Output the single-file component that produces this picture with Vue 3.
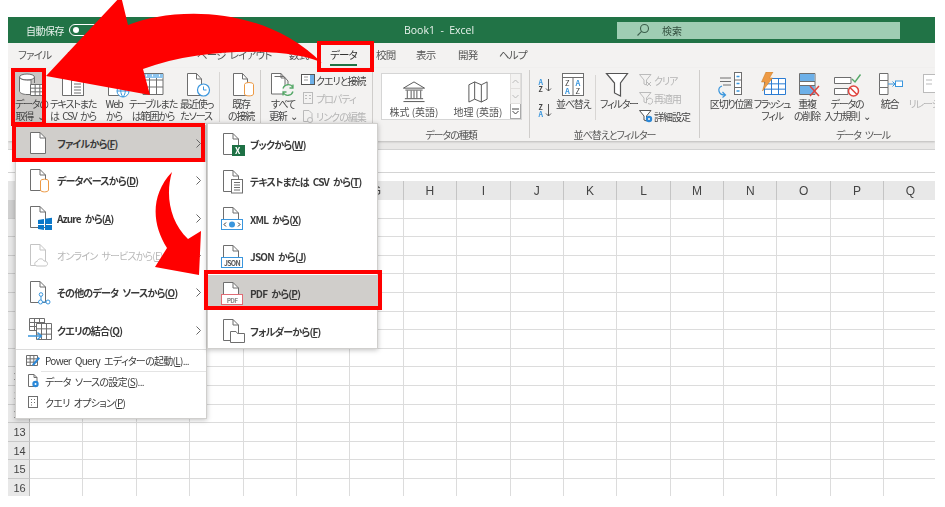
<template>
<div class="page">
  <div class="window">
    <!-- title bar -->
    <div class="titlebar">
      <div class="title-left">
        <span>自動保存</span>
        <span class="toggle"><i></i></span>
        <span>オフ</span>
      </div>
      <div class="title-name">Book1 &nbsp;-&nbsp; Excel</div>
      <div class="search">
        <svg width="14" height="14" viewBox="0 0 14 14" fill="none" stroke="#3c5f4c" stroke-width="1.1">
          <circle cx="8.5" cy="5.5" r="4"/><path d="M5.6 8.4 1.5 12.5"/>
        </svg>
        <span>検索</span>
      </div>
    </div>

    <!-- tabs -->
    <div class="tabs">
      <div v-for="(t, i) in tabs" :key="t.name" class="tab" :class="{ active: t.name === 'データ' }" :style="{ width: tabWidth(i) + 'px' }">
        <span>{{ t.name }}</span>
      </div>
    </div>

    <!-- ribbon -->
    <div class="ribbon">
      <div class="group g-get">
        <div class="group-body">
          <div v-for="c in getCmds" :key="c.lines[0]" class="cmd" :class="{ pressed: c.pressed }" :style="{ width: c.w + 'px' }">
            <svg class="cmd-icon" viewBox="0 0 32 26" v-html="icons[c.icon]"></svg>
            <div v-for="l in c.lines" :key="l" class="cmd-line">{{ l }}</div>
          </div>
          <div class="vsep"></div>
          <div class="cmd w42">
            <svg class="cmd-icon" viewBox="0 0 32 26" v-html="icons.existing"></svg>
            <div class="cmd-line">既存</div>
            <div class="cmd-line">の接続</div>
          </div>
        </div>
      </div>

      <div class="group g-conn">
        <div class="group-body">
          <div class="cmd w36">
            <svg class="cmd-icon" viewBox="0 0 32 26" v-html="icons.refresh"></svg>
            <div class="cmd-line">すべて</div>
            <div class="cmd-line">更新 ⌄</div>
          </div>
          <div class="small-list">
            <div v-for="s in connItems" :key="s.text" class="small-item" :class="{ off: s.off }">
              <svg width="14" height="14" viewBox="0 0 14 14" v-html="icons[s.icon]"></svg>
              <span>{{ s.text }}</span>
            </div>
          </div>
        </div>
      </div>

      <div class="group g-types">
        <div class="group-body">
          <div class="gallery">
            <div class="gallery-item">
              <svg width="26" height="24" viewBox="0 0 26 24" v-html="icons.bank"></svg>
              <span>株式 (英語)</span>
            </div>
            <div class="gallery-item">
              <svg width="26" height="24" viewBox="0 0 26 24" v-html="icons.map"></svg>
              <span>地理 (英語)</span>
            </div>
            <div class="gallery-scroll">
              <div><svg width="7" height="5" viewBox="0 0 7 5"><path d="M.5 4 3.500 1 6.500 4" fill="none" stroke="#bbb"/></svg></div>
              <div><svg width="7" height="5" viewBox="0 0 7 5"><path d="M.5 1 3.500 4 6.500 1" fill="none" stroke="#bbb"/></svg></div>
              <div class="more"><svg width="7" height="7" viewBox="0 0 7 7"><path d="M0 1H7M.5 3 3.500 6 6.500 3" fill="none" stroke="#444"/></svg></div>
            </div>
          </div>
        </div>
        <div class="group-label">データの種類</div>
      </div>

      <div class="group g-sort">
        <div class="group-body">
          <div class="az">
            <svg width="15" height="15" viewBox="0 0 15 15" v-html="icons.az"></svg>
            <svg width="15" height="15" viewBox="0 0 15 15" v-html="icons.za"></svg>
          </div>
          <div class="cmd w33">
            <svg class="cmd-icon" viewBox="0 0 32 26" v-html="icons.sort"></svg>
            <div class="cmd-line">並べ替え</div>
          </div>
          <div class="vsep short"></div>
          <div class="cmd w34">
            <svg class="cmd-icon" viewBox="0 0 32 26" v-html="icons.funnel"></svg>
            <div class="cmd-line">フィルター</div>
          </div>
          <div class="small-list filter-list">
            <div v-for="s in filterItems" :key="s.text" class="small-item" :class="{ off: s.off }">
              <svg width="14" height="14" viewBox="0 0 14 14" v-html="icons[s.icon]"></svg>
              <span>{{ s.text }}</span>
            </div>
          </div>
        </div>
        <div class="group-label">並べ替えとフィルター</div>
      </div>

      <div class="group g-tools">
        <div class="group-body">
          <div v-for="c in toolCmds" :key="c.lines[0]" class="cmd" :class="{ off: c.off }" :style="{ width: c.w + 'px' }">
            <svg class="cmd-icon" viewBox="0 0 32 26" v-html="icons[c.icon]"></svg>
            <div v-for="l in c.lines" :key="l" class="cmd-line">{{ l }}</div>
          </div>
        </div>
        <div class="group-label">データ ツール</div>
      </div>
    </div>

    <div class="strip"></div>
    <div class="formula"></div>

    <!-- sheet -->
    <div class="col-head">
      <div class="corner"></div>
      <div v-for="c in columns" :key="c" class="col">{{ c }}</div>
    </div>
    <div class="sheet">
      <div class="row-heads">
        <div v-for="r in rows" :key="r" class="row-head" :class="{ first: r === 1 }">{{ r }}</div>
      </div>
      <div class="cells">
        <div v-for="n in rows.length * columns.length" :key="n" class="cell"></div>
      </div>
    </div>
  </div>

  <!-- first level menu -->
  <div class="menu main-menu">
    <div v-for="m in mainItems" :key="m.key" class="item" :class="{ active: m.active, off: m.off }">
      <svg class="item-icon" viewBox="0 0 30 24" v-html="icons[m.icon]"></svg>
      <span class="item-text">{{ m.pre }}(<u>{{ m.key }}</u>)</span>
      <svg class="chev" width="5" height="9" viewBox="0 0 5 9"><path d="M.5.500 4.500 4.500.5 8.500" fill="none" stroke="#666"/></svg>
    </div>
    <div class="menu-sep"></div>
    <div v-for="(m, i) in smallItems" :key="m.key" class="mini" :class="{ lined: i === 1 }">
      <svg width="14" height="14" viewBox="0 0 14 14" v-html="icons[m.icon]"></svg>
      <span>{{ m.pre }}(<u>{{ m.key }}</u>){{ m.post }}</span>
    </div>
  </div>

  <!-- file submenu -->
  <div class="menu sub-menu">
    <div v-for="m in subItems" :key="m.key" class="item" :class="{ active: m.active }">
      <svg class="item-icon" viewBox="0 0 30 24" v-html="icons[m.icon]"></svg>
      <span class="item-text">{{ m.pre }}(<u>{{ m.key }}</u>)</span>
    </div>
  </div>

  <!-- callouts drawn on top of the screenshot -->
  <svg class="callouts" width="945" height="507" viewBox="0 0 945 507">
    <g fill="none" stroke="#f00" stroke-width="4">
      <rect x="319" y="43" width="53" height="27"/>
      <rect x="13" y="70" width="31" height="54"/>
      <rect x="14" y="125" width="189" height="35"/>
      <rect x="206" y="272" width="174" height="36"/>
    </g>
    <path fill="#f00" d="M46 76 121-4 128 25C170 8 262 3 322 63 300 50 210 44 143 69L150 95Z"/>
    <path fill="#f00" d="M172 172C150 195 152 225 167 248L155 267 199 275 201 231 188 239C170 222 165 195 172 172Z"/>
  </svg>
</div>
</template>

<script setup>
const tabs = [
  { name: 'ファイル', x: 18 }, { name: 'ホーム', x: 67 }, { name: '挿入', x: 120 },
  { name: 'ページ レイアウト', x: 197 }, { name: '数式', x: 289 }, { name: 'データ', x: 330 },
  { name: '校閲', x: 376 }, { name: '表示', x: 416 }, { name: '開発', x: 458 }, { name: 'ヘルプ', x: 499 }
]
function tabWidth(i) {
  return i < tabs.length - 1 ? tabs[i + 1].x - tabs[i].x : 40
}

const getCmds = [
  { icon: 'getData', lines: ['データの', '取得 ⌄'], w: 29, pressed: true },
  { icon: 'textCsv', lines: ['テキストまた', 'は CSV から'], w: 58 },
  { icon: 'web', lines: ['Web', 'から'], w: 24 },
  { icon: 'table', lines: ['テーブルまた', 'は範囲から'], w: 54 },
  { icon: 'recent', lines: ['最近使っ', 'たソース'], w: 32 }
]
const connItems = [
  { icon: 'sConn', text: 'クエリと接続' },
  { icon: 'sProp', text: 'プロパティ', off: true },
  { icon: 'sLink', text: 'リンクの編集', off: true }
]
const filterItems = [
  { icon: 'sClear', text: 'クリア', off: true },
  { icon: 'sReapply', text: '再適用', off: true },
  { icon: 'sAdvanced', text: '詳細設定' }
]
const toolCmds = [
  { icon: 'split', lines: ['区切り位置'], w: 44 },
  { icon: 'flash', lines: ['フラッシュ', 'フィル'], w: 38 },
  { icon: 'dedupe', lines: ['重複', 'の削除'], w: 32 },
  { icon: 'validate', lines: ['データの', '入力規則 ⌄'], w: 48 },
  { icon: 'merge2', lines: ['統合'], w: 37 },
  { icon: 'relation', lines: ['リレーション'], w: 46, off: true }
]

const columns = 'ABCDEFGHIJKLMNOPQ'.split('')
const rows = Array.from({ length: 16 }, (_, i) => i + 1)

const mainItems = [
  { icon: 'file', pre: 'ファイルから', key: 'F', active: true },
  { icon: 'database', pre: 'データベースから', key: 'D' },
  { icon: 'azure', pre: 'Azure から', key: 'A' },
  { icon: 'online', pre: 'オンライン サービスから', key: 'E', off: true },
  { icon: 'other', pre: 'その他のデータ ソースから', key: 'O' },
  { icon: 'combine', pre: 'クエリの結合', key: 'Q' }
]
const smallItems = [
  { icon: 'sPq', pre: 'Power Query エディターの起動', key: 'L', post: '...' },
  { icon: 'sSettings', pre: 'データ ソースの設定', key: 'S', post: '...' },
  { icon: 'sOptions', pre: 'クエリ オプション', key: 'P', post: '' }
]
const subItems = [
  { icon: 'book', pre: 'ブックから', key: 'W' },
  { icon: 'subText', pre: 'テキストまたは CSV から', key: 'T' },
  { icon: 'xml', pre: 'XML から', key: 'X' },
  { icon: 'json', pre: 'JSON から', key: 'J' },
  { icon: 'pdf', pre: 'PDF から', key: 'P', active: true },
  { icon: 'folder', pre: 'フォルダーから', key: 'F' }
]

const G = '#6e6e6e'
const B = '#3a96dd'
const O = '#ed9a45'
const doc = (c = G) => `<path d="M3.500.5H13L18.500 6V21.500H3.500Z" fill="#fff" stroke="${c}"/><path d="M13 .5V6H18.500" fill="none" stroke="${c}"/>`
const bigDoc = (x, c = G) => `<path d="M${x}.5 1.500H${x + 9.500}L${x + 14}.5 7V23.500H${x}.5Z" fill="#fff" stroke="${c}"/><path d="M${x + 9.500} 1.500V7H${x + 14.500}" fill="none" stroke="${c}"/>`
const grid = (x, y, w, h, c = G) => {
  const cw = w / 3
  const ch = h / 3
  return `<path fill="#fff" stroke="${c}" d="M${x} ${y}h${w}v${h}h${-w}zM${x + cw} ${y}v${h}M${x + 2 * cw} ${y}v${h}M${x} ${y + ch}h${w}M${x} ${y + 2 * ch}h${w}"/>`
}
const tag = (inner, c) => `${doc()}<rect x="1.500" y="12.500" width="21" height="10" fill="#fff" stroke="${c}"/>${inner}`

const icons = {
  // ribbon commands
  getData: `<ellipse cx="12" cy="5" rx="7.500" ry="3" fill="#fff" stroke="${G}"/><path d="M4.500 5V19C4.500 21 8 22.500 12 22.500H16V8C10 8.500 4.500 7.500 4.500 5ZM19.500 5V11" fill="#fff" stroke="${G}"/>` + grid(15.5, 12.5, 14, 11),
  textCsv: bigDoc(5) + `<rect x="14.500" y="8.500" width="12" height="15" fill="#fff" stroke="${G}"/><path d="M17 12h7M17 15h7M17 18h7M17 21h7" stroke="${G}"/>`,
  web: bigDoc(6) + `<circle cx="21" cy="19" r="6" fill="#fff" stroke="${B}"/><path d="M15 19h12M21 13c-3 4-3 8 0 12M21 13c3 4 3 8 0 12" fill="none" stroke="${B}"/>`,
  table: `<path d="M6 1.500h20v21H6zM6 8h20M6 15h20M12.500 1.500v21M19.500 1.500v21" fill="#fff" stroke="${G}"/><path d="M6 2h20v4H6z" fill="#8cc4ee"/><path d="M9 3.500h1M15 3.500h1M22 3.500h1" stroke="#fff" stroke-width="2"/>`,
  recent: bigDoc(7) + `<circle cx="23.500" cy="18" r="6" fill="#fff" stroke="${B}" stroke-width="1.200"/><path d="M23.500 14.500V18H26.500" fill="none" stroke="${B}"/>`,
  existing: bigDoc(8) + `<ellipse cx="24" cy="12.500" rx="4.500" ry="2" fill="#fff" stroke="${O}"/><path d="M19.500 12.500V22C19.500 24.500 28.500 24.500 28.500 22V12.500" fill="#fff" stroke="${O}"/>`,
  refresh: `<path d="M4.500 1.500H14L18 6V22H4.500Z M14 1.500V6H18" fill="#fff" stroke="${G}"/><path d="M7.500 4.500H17L21 9V12" fill="none" stroke="${G}"/><circle cx="21" cy="18" r="6" fill="#f3f2f1"/><path d="M16 16.500A5.500 5.500 0 0 1 26 15.500M26 19.500A5.500 5.500 0 0 1 16 20.500M26 12.500V16H22.500M16 23.500V20H19.500" fill="none" stroke="#55a868" stroke-width="1.300"/>`,
  sort: `<rect x="5.500" y="1.500" width="21" height="22" fill="#fff" stroke="${G}"/><path d="M5.500 5.500H26.500M16 5.500V23.500" stroke="${G}"/><text x="8" y="14" font-size="7.500" fill="#444">Z</text><text x="8" y="22" font-size="7.500" fill="${B}" font-weight="700">A</text><text x="18.500" y="14" font-size="7.500" fill="${B}" font-weight="700">A</text><text x="18.500" y="22" font-size="7.500" fill="#444">Z</text>`,
  funnel: `<path d="M5.500 1.500H26.500L19.500 11V24L13.500 21V11Z" fill="#fff" stroke="#555" stroke-width="1.200"/>`,
  split: `<path d="M5 6h11M5 9.500h11M8 13h8" stroke="${G}"/><rect x="19.500" y=".5" width="7" height="22" fill="#fff" stroke="${G}"/><path d="M19.500 8h7M19.500 15.500h7" stroke="${G}"/><path d="M21.500 4.500h3M21.500 11.500h3M21.500 19h3" stroke="${B}" stroke-width="1.500"/><path d="M7 14C2 16 3 23 10 23M7.500 20 10.500 23 7.500 25.500" fill="none" stroke="${B}" stroke-width="1.200"/>`,
  flash: grid(8.5, 6.5, 21, 16, '#2b7cd3') + `<path d="M10 0H17L13.500 6H16.500L6.500 19 9 10H5.500Z" fill="${O}" stroke="#c97a20" stroke-width=".5"/>`,
  dedupe: `<path d="M8.500 1.500H24v21H8.500z" fill="#fff" stroke="${G}"/><path d="M9 2h14.500v7H9zM9 14h14.500v8H9z" fill="#6db0e8"/><path d="M8.500 9.500H24M8.500 13.500H24" stroke="${G}"/><path d="M19 14 28 24M28 14 19 24" stroke="#e0443e" stroke-width="1.500"/>`,
  validate: `<path d="M3.500 5.500H20v6H3.500zM3.500 16.500H17v6H3.500z" fill="#fff" stroke="${G}"/><path d="M21 7 24 10 29.500 2.500" fill="none" stroke="#55a868" stroke-width="1.400"/><circle cx="22.500" cy="19" r="5" fill="#fff" stroke="#e0443e" stroke-width="1.500"/><path d="M19 15.500 26 22.500" stroke="#e0443e" stroke-width="1.500"/>`,
  merge2: `<path d="M5.500 1.500H14v7H5.500zM5.500 8.500H14v7H5.500zM5.500 15.500H14v7H5.500z" fill="#fff" stroke="${G}"/><path d="M14 12H21M18.500 9.500 21 12 18.500 14.500" fill="none" stroke="${B}"/><rect x="21.500" y="9" width="7" height="5.500" fill="#fff" stroke="${B}"/>`,
  relation: `<rect x="8.500" y="2.500" width="15" height="18" fill="#fff" stroke="#bbb"/><path d="M11 8h6M11 12h6" stroke="#bbb"/>`,
  // ribbon small
  sConn: `<rect x=".5" y="1.500" width="13" height="10" fill="#fff" stroke="#555"/><rect x="9" y="2" width="4" height="9" fill="#6db0e8"/><path d="M3 4h4M3 7h4" stroke="#999"/>`,
  sProp: `<rect x="2.500" y="1.500" width="9" height="11" fill="none" stroke="#bbb"/><path d="M4 4.500h2M8 4.500h2M4 7.500h2M8 7.500h2" stroke="#bbb"/>`,
  sLink: `<path d="M2.500 1.500H8L11 4.500V12.500H2.500Z" fill="none" stroke="#bbb"/><circle cx="9" cy="11" r="2.500" fill="#f3f2f1" stroke="#bbb"/>`,
  sClear: `<path d="M.5 1.500H12L7.500 7V12L5 11V7Z" fill="none" stroke="#bbb"/><path d="M8 9 12 13M12 9 8 13" stroke="#bbb"/>`,
  sReapply: `<path d="M.5 1.500H12L7.500 7V12L5 11V7Z" fill="none" stroke="#bbb"/><path d="M8 9a3 3 0 1 1 1 3.500" fill="none" stroke="#bbb"/>`,
  sAdvanced: `<path d="M.5 1.500H12L7.500 7V12L5 11V7Z" fill="#fff" stroke="#555"/><circle cx="10" cy="10" r="3.200" fill="#2b88d8"/><circle cx="10" cy="10" r="1" fill="#fff"/>`,
  az: `<text x=".5" y="7" font-size="7" font-weight="700" fill="${B}">A</text><text x=".5" y="14" font-size="7" font-weight="700" fill="#444">Z</text><path d="M10.500 1V13M8 10.500 10.500 13 13 10.500" fill="none" stroke="#555"/>`,
  za: `<text x=".5" y="7" font-size="7" font-weight="700" fill="#444">Z</text><text x=".5" y="14" font-size="7" font-weight="700" fill="${B}">A</text><path d="M10.500 1V13M8 10.500 10.500 13 13 10.500" fill="none" stroke="#555"/>`,
  bank: `<path d="M2 8.500 13 2 24 8.500Z" fill="#fff" stroke="#555"/><path d="M4 10.500H22M6 11V19M10 11V19M13 11V19M16 11V19M20 11V19M3.500 19.500H22.500M2 22.500H24" fill="none" stroke="#555"/>`,
  map: `<path d="M3.500 5 9.500 2 16.500 5 22.500 2V20L16.500 23 9.500 20 3.500 23Z M9.500 2V20M16.500 5V23" fill="#fff" stroke="#555"/>`,
  // menu
  file: doc(),
  database: doc() + `<ellipse cx="17.500" cy="12" rx="4" ry="1.800" fill="#fff" stroke="${O}"/><path d="M13.500 12V21C13.500 23.500 21.500 23.500 21.500 21V12" fill="#fff" stroke="${O}"/>`,
  azure: doc() + `<path d="M11 14 17 13V18H11ZM18 12.800 25 11.700V18H18ZM11 19H17V24L11 23ZM18 19H25V25L18 24Z" fill="#0b78c9"/>`,
  online: doc('#c4c4c4') + `<path d="M10 22C7 22 7 17.500 10 17.500 11 14 16 14 17 17 21 16.500 22 22 18 22Z" fill="#fff" stroke="#c4c4c4"/>`,
  other: doc() + `<path d="M14 15V19M15.500 21H19" stroke="${B}"/><circle cx="14" cy="13.500" r="1.800" fill="#fff" stroke="${B}"/><circle cx="13.500" cy="21" r="2" fill="#fff" stroke="${B}"/><circle cx="21" cy="21" r="2" fill="#fff" stroke="${B}"/>`,
  combine: grid(2.5, .5, 15, 12) + grid(9.5, 5.5, 15, 16) + `<path d="M1 18H14M10.500 14.500 14.500 18 10.500 21.500" fill="none" stroke="${B}" stroke-width="1.300"/>`,
  sPq: grid(.5, 2.5, 11, 10) + `<path d="M6 11.500 12.500 4 14 5.500 7.500 13Z" fill="#2b88d8"/>`,
  sSettings: `<path d="M2.500 .5H8L11 3.500V12.500H2.500Z M8 .5V3.500H11" fill="#fff" stroke="${G}"/><circle cx="9.500" cy="10" r="3.200" fill="#2b88d8"/><circle cx="9.500" cy="10" r="1" fill="#fff"/>`,
  sOptions: `<rect x="2.500" y="1.500" width="9" height="11" fill="#fff" stroke="${G}"/><path d="M5 4.500h1M8 4.500h1M5 7.500h1M8 7.500h1M5 10h1" stroke="${G}"/>`,
  book: doc() + `<rect x="12" y="12" width="13" height="11" fill="#1e7145"/><text x="15" y="21" font-size="8.500" font-weight="700" fill="#fff">X</text>`,
  subText: doc() + `<rect x="11.500" y="9.500" width="11" height="13.500" fill="#fff" stroke="${G}"/><path d="M14 12.500h6M14 15h6M14 17.500h6M14 20h6" stroke="${G}"/>`,
  xml: tag(`<path d="M6 15.500 4 17.500 6 19.500M18 15.500 20 17.500 18 19.500" fill="none" stroke="#333"/><circle cx="12" cy="17.500" r="3" fill="#3a96dd"/>`, B),
  json: tag(`<text x="12" y="20.500" text-anchor="middle" font-size="7" fill="#555">JSON</text>`, B),
  pdf: tag(`<text x="12" y="20.500" text-anchor="middle" font-size="6.500" fill="#888">PDF</text>`, '#e06c75'),
  folder: doc() + `<path d="M10.500 12.500H16L17.500 14.500H24.500V23.500H10.500Z" fill="#fff" stroke="${G}"/>`
}
</script>

<style>
html, body { margin: 0; background: #fff; }
</style>

<style scoped>
.page {
  position: relative;
  width: 945px;
  height: 507px;
  box-sizing: border-box;
  padding: 17px 10px 11px 8px;
  overflow: hidden;
  font-family: "Noto Sans CJK JP", "Liberation Sans", sans-serif;
  font-feature-settings: "palt";
  word-spacing: 2.5px;
  color: #444;
  font-size: 10px;
}
.window {
  height: 100%;
  overflow: hidden;
  background: #fff;
  filter: blur(0.35px);
}

.titlebar {
  display: flex;
  align-items: center;
  height: 26px;
  background: #217346;
  color: #e8f2ec;
  font-size: 10px;
}
.title-left {
  display: flex;
  align-items: center;
  gap: 5px;
  width: 396px;
  box-sizing: border-box;
  padding-left: 18px;
  letter-spacing: -0.5px;
}
.toggle {
  display: flex;
  align-items: center;
  width: 28px;
  height: 10px;
  border: 1px solid #fff;
  border-radius: 6px;
}
.toggle i {
  width: 6px;
  height: 6px;
  margin-left: 3px;
  border-radius: 50%;
  background: #fff;
}
.title-name { width: 213px; font-family: "Open Sans", sans-serif; font-size: 10.5px; word-spacing: 0; }
.search {
  display: flex;
  align-items: center;
  gap: 12px;
  width: 283px;
  height: 17px;
  box-sizing: border-box;
  padding-left: 19px;
  background: #9fcdb3;
  color: #33503f;
}

.tabs {
  display: flex;
  height: 25px;
  padding-left: 10px;
  background: #f3f2f1;
  font-size: 10.5px;
  letter-spacing: -0.8px;
  color: #555;
}
.tab { line-height: 24px; white-space: nowrap; }
.tab.active { color: #333; }
.tab.active span {
  display: inline-block;
  height: 21px;
  border-bottom: 2px solid #217346;
}

.ribbon {
  display: flex;
  height: 73px;
  box-sizing: border-box;
  padding-top: 2px;
  background: #f3f2f1;
  box-shadow: 0 1px 2px rgba(0, 0, 0, 0.2);
  position: relative;
}
.group {
  box-sizing: border-box;
  height: 68px;
  border-right: 1px solid #cfcdcb;
  padding-top: 2px;
}
.group-body { display: flex; height: 57px; }
.group-label {
  line-height: 12px;
  text-align: center;
  white-space: nowrap;
  font-size: 10px;
  letter-spacing: -1px;
  color: #555;
}
.g-get { width: 253px; padding-left: 7px; }
.g-conn { width: 112px; padding-left: 4px; }
.g-types { width: 157px; padding-left: 8px; }
.g-sort { width: 170px; padding-left: 8px; }
.g-tools { width: 235px; padding-left: 9px; border-right: 0; }
.g-types .group-label, .g-sort .group-label { margin-left: -8px; }
.g-tools .group-label { margin-left: 82px; }

.cmd {
  flex: none;
  box-sizing: border-box;
  height: 50px;
  text-align: center;
  white-space: nowrap;
}
.cmd.pressed { background: #c8c6c4; }
.cmd.off { color: #b5b5b5; }
.cmd-icon { display: block; width: 32px; height: 26px; margin: 0 auto; }
.cmd-line { line-height: 12px; letter-spacing: -1.2px; }
.w42 { width: 42px; }
.w36 { width: 36px; }
.w33 { width: 33px; }
.w34 { width: 34px; }
.vsep {
  flex: none;
  width: 1px;
  height: 50px;
  margin: 0 0 0 7px;
  background: #d8d6d4;
}
.vsep.short { margin: 3px 4px 0 6px; height: 45px; }

.small-list {
  display: flex;
  flex-direction: column;
  justify-content: space-between;
  margin-top: 1px;
  height: 50px;
}
.small-item {
  display: flex;
  align-items: center;
  gap: 1px;
  height: 14px;
  white-space: nowrap;
  letter-spacing: -1px;
}
.small-item.off { color: #b5b5b5; }
.filter-list { margin-left: 5px; }

.gallery {
  display: flex;
  width: 141px;
  height: 47px;
  margin-top: 1px;
  border: 1px solid #d5d5d5;
  box-sizing: border-box;
  background: #fff;
}
.gallery-item {
  flex: 1;
  display: flex;
  flex-direction: column;
  align-items: center;
  padding-top: 6px;
  gap: 1px;
  white-space: nowrap;
  word-spacing: 0;
  color: #555;
}
.gallery-scroll {
  flex: none;
  width: 11px;
  display: flex;
  flex-direction: column;
  background: #f3f2f1;
}
.gallery-scroll div {
  flex: 1;
  display: flex;
  align-items: center;
  justify-content: center;
  border: 1px solid #e1dfdd;
  border-top: 0;
}
.gallery-scroll .more { background: #fff; border-color: #aaa; }

.az {
  display: flex;
  flex-direction: column;
  gap: 10px;
  margin: 6px 3px 0 0;
}

.strip {
  height: 9px;
  background: #e9e8e7;
  border-bottom: 1px solid #d2d2d2;
  box-sizing: border-box;
}
.formula {
  height: 23px;
  background: #fff;
  border-bottom: 1px solid #d4d4d4;
  box-sizing: border-box;
}

.col-head {
  display: flex;
  height: 27px;
  padding-top: 8px;
  box-sizing: border-box;
  background: #fff;
}
.corner {
  flex: none;
  width: 22px;
  background: #e6e6e6;
}
.col {
  flex: none;
  width: 53.4px;
  box-sizing: border-box;
  text-align: center;
  line-height: 20px;
  font-family: "Liberation Sans", sans-serif;
  font-size: 12px;
  color: #444;
  background: #e8e8e8;
  border-right: 1px solid #c4c4c4;
}
.sheet { display: flex; }
.row-heads { flex: none; width: 22px; }
.row-head {
  height: 18.6px;
  box-sizing: border-box;
  padding-left: 2px;
  text-align: center;
  line-height: 19px;
  font-family: "Liberation Sans", sans-serif;
  font-size: 11px;
  background: #e8e8e8;
  border-bottom: 1px solid #c8c8c8;
  border-right: 1px solid #b9b9b9;
}
.row-head.first { background: #d0d0d0; }
.cells {
  display: grid;
  grid-template-columns: repeat(17, 53.4px);
  grid-auto-rows: 18.6px;
}
.cell {
  box-sizing: border-box;
  border-right: 1px solid #dcdcdc;
  border-bottom: 1px solid #dcdcdc;
}

.menu {
  position: absolute;
  box-sizing: border-box;
  background: #fff;
  border: 1px solid #d0cfcd;
  box-shadow: 0 1px 5px rgba(0, 0, 0, 0.25);
  filter: blur(0.3px);
  color: #3a3a3a;
}
.main-menu { left: 15px; top: 123px; width: 192px; height: 296px; padding-top: 1px; }
.sub-menu { left: 207px; top: 123px; width: 171px; height: 226px; padding-top: 2px; }
.item {
  display: flex;
  align-items: center;
  height: 37.3px;
  font-weight: 700;
  font-size: 10px;
  letter-spacing: -0.8px;
  white-space: nowrap;
}
.item.active { background: #d0cecb; }
.sub-menu .item.active {
  box-sizing: border-box;
  padding-top: 4px;
  border-bottom: 4px solid #fff;
}
.item.off { color: #b8b8b8; font-weight: 400; }
.item-icon { flex: none; width: 30px; height: 24px; }
.main-menu .item-icon { margin-left: 11px; }
.sub-menu .item-icon { margin-left: 12px; }
.chev { position: absolute; left: 180px; }
.menu-sep { height: 1px; background: #dcdcdc; }
.mini {
  display: flex;
  align-items: center;
  gap: 5px;
  height: 21px;
  padding-left: 10px;
  white-space: nowrap;
  font-size: 10px;
  letter-spacing: -0.7px;
}
.mini:first-of-type { height: 26px; }
.mini.lined { position: relative; }
.mini.lined::before {
  content: "";
  position: absolute;
  left: 25px;
  right: 0;
  top: 0;
  height: 1px;
  background: #e4e4e4;
}
.callouts { position: absolute; left: 0; top: 0; pointer-events: none; }
</style>
